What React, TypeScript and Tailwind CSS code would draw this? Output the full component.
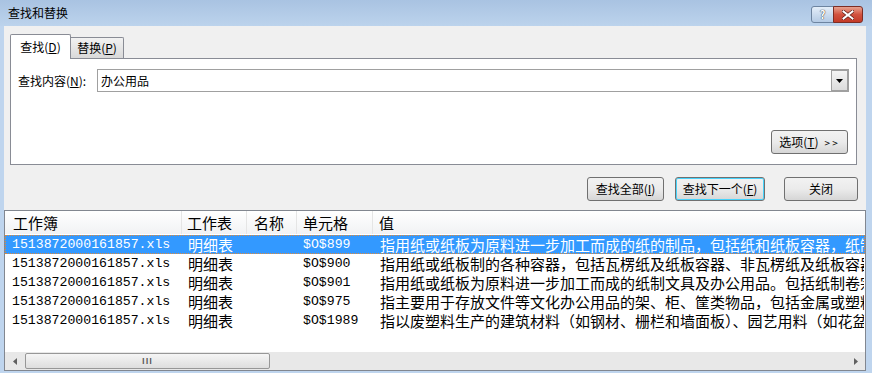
import React from "react";

const rows = [
  { book: "1513872000161857.xls", sheet: "明细表", cell: "$O$899", value: "指用纸或纸板为原料进一步加工而成的纸的制品，包括纸和纸板容器，纸制品" },
  { book: "1513872000161857.xls", sheet: "明细表", cell: "$O$900", value: "指用纸或纸板制的各种容器，包括瓦楞纸及纸板容器、非瓦楞纸及纸板容器" },
  { book: "1513872000161857.xls", sheet: "明细表", cell: "$O$901", value: "指用纸或纸板为原料进一步加工而成的纸制文具及办公用品。包括纸制卷宗" },
  { book: "1513872000161857.xls", sheet: "明细表", cell: "$O$975", value: "指主要用于存放文件等文化办公用品的架、柜、筐类物品，包括金属或塑料" },
  { book: "1513872000161857.xls", sheet: "明细表", cell: "$O$1989", value: "指以废塑料生产的建筑材料（如钢材、栅栏和墙面板）、园艺用料（如花盆" },
];

const ui = "font-['Microsoft_YaHei','Noto_Sans_CJK_SC',sans-serif]";
const cjk = "font-['Noto_Sans_CJK_SC',sans-serif]";
const mono = "font-['Liberation_Mono','Noto_Sans_CJK_SC',monospace]";

function Btn({ children, className = "" }: { children: React.ReactNode; className?: string }) {
  return (
    <div
      className={`flex h-[24px] items-center justify-center rounded-[3px] border border-[#707070] bg-gradient-to-b from-[#f2f2f2] via-[#ebebeb] to-[#d6d6d6] text-[12px] text-black ${className}`}
    >
      {children}
    </div>
  );
}

export default function App() {
  return (
    <div className={`flex h-[373px] w-[872px] flex-col overflow-hidden bg-[#bfd5ee] ${ui}`}>
      {/* title bar */}
      <div className="flex h-[26px] items-center justify-between bg-gradient-to-b from-[#a9c3e2] to-[#bcd3ec] pl-[8px] pr-[9px]">
        <span className="text-[12px] text-black">查找和替换</span>
        <div className="flex items-start self-start pt-[6px]">
          <div className="flex h-[17px] w-[23px] items-center justify-center rounded-l-[3px] border border-[#6d84a0] bg-gradient-to-b from-[#e4eef9] to-[#b4cae4] text-[11px] font-bold leading-none text-white [text-shadow:0_0_1px_#333,0_0_1px_#333]">
            ?
          </div>
          <div className="-ml-px flex h-[17px] w-[30px] items-center justify-center rounded-r-[3px] border border-[#7d2d24] bg-gradient-to-b from-[#e6a18f] via-[#d2523f] to-[#c33a27]">
            <svg width="12" height="10" viewBox="0 0 12 10">
              <path d="M1.5 1.5 L10.5 8.5 M10.5 1.5 L1.5 8.5" stroke="#5a1a12" strokeWidth="3.4" strokeLinecap="square" />
              <path d="M1.5 1.5 L10.5 8.5 M10.5 1.5 L1.5 8.5" stroke="#ffffff" strokeWidth="2" strokeLinecap="square" />
            </svg>
          </div>
        </div>
      </div>

      {/* client area */}
      <div className="ml-[4px] mr-[6px] flex h-[345px] flex-col bg-[#f0f0f0]">
        {/* tabs */}
        <div className="ml-[6px] mt-[8px] flex items-end">
          <div className="z-10 -mb-px flex h-[25px] w-[61px] items-center justify-center rounded-t-[2px] border border-b-0 border-[#898c95] bg-white text-[12px]">
            查找(<span className="underline">D</span>)
          </div>
          <div className="flex h-[21px] w-[53px] items-center justify-center rounded-tr-[2px] border border-l-0 border-b-0 border-[#898c95] bg-gradient-to-b from-[#f2f2f2] to-[#d9d9d9] text-[12px]">
            替换(<span className="underline">P</span>)
          </div>
        </div>

        {/* tab panel */}
        <div className="ml-[6px] mr-[9px] flex h-[107px] flex-col border border-[#898c95] bg-white px-[7px] pb-[10px] pt-[10px]">
          <div className="flex items-center">
            <span className="w-[79px] text-[12px]">
              查找内容(<span className="underline">N</span>):
            </span>
            <div className="flex h-[23px] flex-1 items-center justify-between border border-[#a0a0a0] bg-white pl-[3px]">
              <span className="text-[12px]">办公用品</span>
              <div className="flex h-[21px] w-[17px] items-center justify-center border border-[#a0a0a0] bg-gradient-to-b from-[#f4f4f4] to-[#dcdcdc]">
                <svg width="7" height="4" viewBox="0 0 7 4">
                  <path d="M0 0 H7 L3.5 4 Z" fill="#000" />
                </svg>
              </div>
            </div>
          </div>
          <div className="mt-auto flex justify-end">
            <Btn className="mr-[1px] w-[77px] gap-[6px]">
              <span>
                选项(<span className="underline">T</span>)
              </span>
              <span className="text-[10px] tracking-[2px]">&gt;&gt;</span>
            </Btn>
          </div>
        </div>

        {/* action buttons */}
        <div className="mr-[8px] mt-[12px] flex justify-end">
          <Btn className="w-[77px]">
            查找全部(<span className="underline">I</span>)
          </Btn>
          <Btn className="ml-[11px] w-[90px] border-[#3c7fb1] shadow-[inset_0_0_0_1px_#48d3fb]">
            查找下一个(<span className="underline">F</span>)
          </Btn>
          <Btn className="ml-[19px] w-[74px]">关闭</Btn>
        </div>

        {/* results list */}
        <div className="mt-[9px] flex h-[161px] flex-col border border-[#828790] bg-white">
          <div className={`flex h-[23px] items-center bg-gradient-to-b from-white to-[#f1f2f4] text-[15px] leading-[23px] text-black ${cjk}`}>
            <div className="w-[177px] border-r border-[#e5e5e5] pl-[8px]">工作簿</div>
            <div className="w-[65px] border-r border-[#e5e5e5] pl-[5px]">工作表</div>
            <div className="w-[50px] border-r border-[#e5e5e5] pl-[7px]">名称</div>
            <div className="w-[76px] border-r border-[#e5e5e5] pl-[6px]">单元格</div>
            <div className="flex-1 pl-[6px]">值</div>
          </div>
          <div className="mt-[1px] flex flex-1 flex-col overflow-hidden">
            {rows.map((r, i) => (
              <div
                key={i}
                className={`flex h-[19px] items-center whitespace-nowrap leading-[17px] ${
                  i === 0 ? "border border-dotted border-[#e08a3a] bg-[#3399ff] text-white" : "border border-transparent text-black"
                }`}
              >
                <div className={`w-[177px] pl-[6px] text-[13.2px] ${mono}`}>{r.book}</div>
                <div className={`w-[114px] pl-[5px] text-[15px] ${cjk}`}>{r.sheet}</div>
                <div className={`w-[83px] pl-[6px] text-[13.2px] ${mono}`}>{r.cell}</div>
                <div className={`min-w-0 flex-1 overflow-hidden text-[15px] ${cjk}`}>{r.value}</div>
              </div>
            ))}
          </div>
          {/* horizontal scrollbar */}
          <div className="flex h-[18px] items-center bg-[#e8e8e8]">
            <div className="flex h-full w-[20px] items-center justify-center">
              <svg width="4" height="7" viewBox="0 0 4 7">
                <path d="M4 0 V7 L0 3.5 Z" fill="#606060" />
              </svg>
            </div>
            <div className="flex h-[16px] w-[245px] items-center justify-center rounded-[2px] border border-[#979797] bg-gradient-to-b from-[#f5f5f5] to-[#dedede]">
              <span className="text-[8px] font-bold tracking-[1px] text-[#555]">III</span>
            </div>
            <div className="flex-1" />
            <div className="flex h-full w-[18px] items-center justify-center">
              <svg width="4" height="7" viewBox="0 0 4 7">
                <path d="M0 0 V7 L4 3.5 Z" fill="#606060" />
              </svg>
            </div>
          </div>
        </div>
      </div>
    </div>
  );
}
